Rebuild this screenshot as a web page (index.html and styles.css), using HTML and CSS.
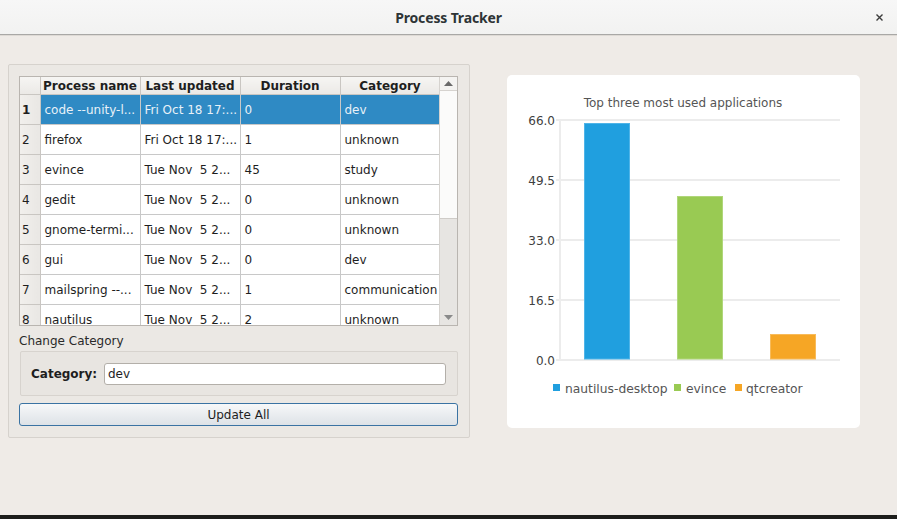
FILE: index.html
```html
<!DOCTYPE html>
<html>
<head>
<meta charset="utf-8">
<link rel="stylesheet" href="styles.css">
</head>
<body>
<div class="window">
  <header class="titlebar">
    <span class="title">Process Tracker</span>
    <span class="close"><svg width="7" height="7" viewBox="0 0 7 7"><path d="M0.5 0.5L6.5 6.5M6.5 0.5L0.5 6.5" stroke="#3c3c3c" stroke-width="1.4"/></svg></span>
  </header>
  <main class="main">
    <section class="panel">
      <div class="tablebox">
        <div class="tableview">
          <table class="grid">
            <colgroup><col class="c-rh"><col class="c-d"><col class="c-d"><col class="c-d"><col class="c-d"></colgroup>
            <thead>
              <tr><th class="corner"></th><th>Process name</th><th>Last updated</th><th>Duration</th><th>Category</th></tr>
            </thead>
            <tbody>
              <tr class="sel"><th>1</th><td>code --unity-l...</td><td>Fri Oct 18 17:...</td><td>0</td><td>dev</td></tr>
              <tr><th>2</th><td>firefox</td><td>Fri Oct 18 17:...</td><td>1</td><td>unknown</td></tr>
              <tr><th>3</th><td>evince</td><td>Tue Nov&nbsp; 5 2...</td><td>45</td><td>study</td></tr>
              <tr><th>4</th><td>gedit</td><td>Tue Nov&nbsp; 5 2...</td><td>0</td><td>unknown</td></tr>
              <tr><th>5</th><td>gnome-termi...</td><td>Tue Nov&nbsp; 5 2...</td><td>0</td><td>unknown</td></tr>
              <tr><th>6</th><td>gui</td><td>Tue Nov&nbsp; 5 2...</td><td>0</td><td>dev</td></tr>
              <tr><th>7</th><td>mailspring --...</td><td>Tue Nov&nbsp; 5 2...</td><td>1</td><td>communication</td></tr>
              <tr><th>8</th><td>nautilus</td><td>Tue Nov&nbsp; 5 2...</td><td>2</td><td>unknown</td></tr>
            </tbody>
          </table>
        </div>
        <div class="vscroll">
          <div class="arrow up"><svg width="9" height="5" viewBox="0 0 9 5"><path d="M0 5L4.5 0L9 5Z" fill="#6a6a6a"/></svg></div>
          <div class="thumb"></div>
          <div class="track"></div>
          <div class="arrow down"><svg width="9" height="5" viewBox="0 0 9 5"><path d="M0 0L4.5 5L9 0Z" fill="#8a8a8a"/></svg></div>
        </div>
      </div>
      <div class="grouptitle">Change Category</div>
      <div class="groupbox">
        <label class="flabel">Category:</label>
        <div class="input">dev</div>
      </div>
      <button class="btn">Update All</button>
    </section>
    <section class="card">
      <svg class="chart" width="353" height="353" viewBox="0 0 353 353">
        <text x="176" y="32" class="ctitle" text-anchor="middle">Top three most used applications</text>
        <g class="gridlines">
          <line x1="49" y1="45" x2="333" y2="45"/>
          <line x1="49" y1="105" x2="333" y2="105"/>
          <line x1="49" y1="165" x2="333" y2="165"/>
          <line x1="49" y1="225" x2="333" y2="225"/>
          <line x1="49" y1="285" x2="333" y2="285"/>
          <line x1="53" y1="45" x2="53" y2="285"/>
        </g>
        <g class="ylabels" text-anchor="end">
          <text x="48" y="50">66.0</text>
          <text x="48" y="110">49.5</text>
          <text x="48" y="170">33.0</text>
          <text x="48" y="230">16.5</text>
          <text x="48" y="290">0.0</text>
        </g>
        <rect x="77.5" y="48.5" width="45" height="235.5" fill="#209fdf" stroke="#4fb4e8"/>
        <rect x="170.5" y="121.5" width="45" height="162.5" fill="#99ca53" stroke="#b0d67a"/>
        <rect x="263.5" y="259.5" width="45" height="24.5" fill="#f6a625" stroke="#f8bb5a"/>
        <g class="legend">
          <rect x="46" y="309" width="7" height="7" fill="#209fdf"/>
          <text x="58" y="318">nautilus-desktop</text>
          <rect x="167" y="309" width="7" height="7" fill="#99ca53"/>
          <text x="179" y="318">evince</text>
          <rect x="228" y="309" width="7" height="7" fill="#f6a625"/>
          <text x="239" y="318">qtcreator</text>
        </g>
      </svg>
    </section>
  </main>
  <div class="taskstrip"></div>
</div>
</body>
</html>
```
FILE: styles.css
```css
html, body {
  margin: 0;
  padding: 0;
}
body {
  width: 897px;
  height: 519px;
  overflow: hidden;
  background: #efebe7;
  font-family: "DejaVu Sans", sans-serif;
  font-size: 12px;
  color: #1e1e1e;
}
.window {
  display: flex;
  flex-direction: column;
  height: 519px;
}
.titlebar {
  height: 34px;
  flex: none;
  background: linear-gradient(#f7f7f7, #f2f2f1);
  border-bottom: 1px solid #a9a8a6;
  box-shadow: 0 1px 0 #dedad5;
  display: flex;
  align-items: center;
  justify-content: center;
  position: relative;
}
.title {
  font-family: "Noto Sans", sans-serif;
  font-weight: bold;
  font-size: 14px;
  color: #2e3436;
  letter-spacing: -0.15px;
}
.close {
  position: absolute;
  right: 14px;
  top: 14px;
  width: 7px;
  height: 7px;
  display: block;
  line-height: 0;
}
.main {
  flex: 1;
  display: flex;
  align-items: flex-start;
  padding: 29px 0 0 8px;
}
.panel {
  width: 462px;
  height: 374px;
  box-sizing: border-box;
  border: 1px solid #d6d2cd;
  border-radius: 2px;
  background: #ebe8e4;
  padding: 11px 11px 0 10px;
  display: flex;
  flex-direction: column;
}
.tablebox {
  width: 439px;
  height: 250px;
  box-sizing: border-box;
  border: 1px solid #b9b5b0;
  background: #ffffff;
  display: flex;
  overflow: hidden;
}
.tableview {
  width: 420px;
  height: 248px;
  overflow: hidden;
}
.grid {
  border-collapse: collapse;
  table-layout: fixed;
  width: 420px;
}
.c-rh { width: 20px; }
.c-d { width: 100px; }
.grid thead th {
  height: 17px;
  padding: 0;
  font-weight: bold;
  font-size: 12px;
  text-align: center;
  background: linear-gradient(#f6f5f3, #ebe9e6);
  border-right: 1px solid #c9c6c2;
  border-bottom: 1px solid #c9c6c2;
  white-space: nowrap;
  overflow: hidden;
}
.grid tbody th {
  height: 29px;
  padding: 0 0 0 2px;
  text-align: left;
  font-weight: normal;
  font-size: 12px;
  background: linear-gradient(90deg, #f1efec, #e9e7e4);
  border-right: 1px solid #c9c6c2;
  border-bottom: 1px solid #c9c6c2;
}
.grid tbody tr.sel th {
  font-weight: bold;
}
.grid td {
  height: 29px;
  padding: 0 0 0 4px;
  border-right: 1px solid #c8c8c8;
  border-bottom: 1px solid #c8c8c8;
  white-space: nowrap;
  overflow: hidden;
  font-size: 12px;
}
.grid tr.sel td {
  background: #2f8ac4;
  color: #e8f1f8;
}
.vscroll {
  width: 17px;
  flex: none;
  display: flex;
  flex-direction: column;
  background: #f4f3f1;
  border-left: 1px solid #d6d3cf;
}
.arrow {
  height: 14px;
  flex: none;
  display: flex;
  align-items: center;
  justify-content: center;
}
.arrow.up {
  border-bottom: 1px solid #d6d3cf;
  height: 13px;
}
.thumb {
  height: 127px;
  flex: none;
  background: #fbfbfa;
  border-bottom: 1px solid #cfccc8;
}
.track {
  flex: 1;
  background: #e7e5e2;
}
.arrow.down {
  height: 16px;
  background: #e7e5e2;
}
.grouptitle {
  margin-top: 8px;
  height: 15px;
  font-size: 12px;
  color: #2a2a2a;
  line-height: 15px;
}
.groupbox {
  margin: 2px 0 0 1px;
  width: 438px;
  height: 45px;
  box-sizing: border-box;
  border: 1px solid #d7d3ce;
  border-radius: 2px;
  background: #e8e5e1;
  display: flex;
  align-items: center;
  padding: 0 11px 0 10px;
  gap: 6px;
}
.flabel {
  font-weight: bold;
  font-size: 12px;
  color: #1e1e1e;
  width: 67px;
  flex: none;
}
.input {
  flex: 1;
  height: 22px;
  box-sizing: border-box;
  border: 1px solid #b3afa9;
  border-radius: 3px;
  background: #ffffff;
  padding: 0 3px;
  line-height: 20px;
  font-size: 12px;
}
.btn {
  margin-top: 7px;
  width: 439px;
  height: 23px;
  box-sizing: border-box;
  border: 1px solid #3a73a3;
  border-radius: 3px;
  background: linear-gradient(#f7f8f9, #dde2e7);
  font-family: "DejaVu Sans", sans-serif;
  font-size: 12px;
  color: #1e1e1e;
  padding: 0;
}
.card {
  margin: 11px 0 0 37px;
  width: 353px;
  height: 353px;
  background: #ffffff;
  border-radius: 5px;
  overflow: hidden;
}
.chart {
  display: block;
  font-family: "DejaVu Sans", sans-serif;
}
.ctitle {
  font-size: 12px;
  fill: #555555;
}
.gridlines line {
  stroke: #ececec;
  stroke-width: 2;
}
.ylabels text {
  font-size: 12px;
  fill: #404040;
}
.legend text {
  font-size: 12.3px;
  fill: #555555;
}
.taskstrip {
  height: 4px;
  flex: none;
  background: #1d1d1b;
}
```
